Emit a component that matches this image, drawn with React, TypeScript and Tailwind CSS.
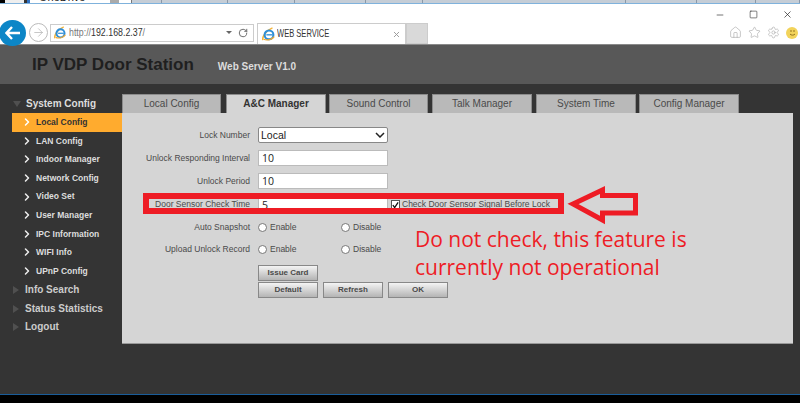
import React from 'react';
import { ChevronRight, Home, Star, Settings, RotateCw, ArrowRight, X, Minus, Square } from 'lucide-react';

const sideItems = ['Local Config', 'LAN Config', 'Indoor Manager', 'Network Config', 'Video Set', 'User Manager', 'IPC Information', 'WIFI Info', 'UPnP Config'];
const tabs = [
  { label: 'Local Config', w: 'w-[99px] mr-[5px]' },
  { label: 'A&C Manager', w: 'w-[100px] mr-[3px]' },
  { label: 'Sound Control', w: 'w-[99px] mr-[4px]' },
  { label: 'Talk Manager', w: 'w-[100px] mr-[4px]' },
  { label: 'System Time', w: 'w-[100px] mr-[3px]' },
  { label: 'Config Manager', w: 'w-[100px]' },
];
const stripCells = ['w-[30px]', 'w-[66px]', 'w-[67px]', 'w-[71px]', 'w-[57px]', 'w-[203px]', 'w-[71px]', 'w-[59px]', 'w-[44px]'];

const IeLogo = ({ size = 13 }: { size?: number }) => (
  <svg width={size} height={size} viewBox="0 0 16 16" className="shrink-0">
    <path d="M1 15C0 12 4 4 12 1" fill="none" stroke="#f5b53a" strokeWidth="1.8" />
    <circle cx="8" cy="9" r="5" fill="none" stroke="#2f8fd8" strokeWidth="2.4" />
    <rect x="5" y="8.2" width="7" height="1.5" fill="#2f8fd8" />
    <path d="M2 14C6 16 12 14 14 11" fill="none" stroke="#f0a830" strokeWidth="1.4" />
  </svg>
);

const Label = ({ children }: { children: React.ReactNode }) => (
  <div className="w-[128px] whitespace-nowrap text-right text-[#4a4a4a] text-[8.5px] font-medium leading-none shrink-0">{children}</div>
);

const TextBox = ({ value }: { value: string }) => (
  <div className="w-[130px] h-full bg-white border border-[#bbb] pl-[3px] text-[10.5px] leading-[14px] text-[#222] font-['Open_Sans',sans-serif]">{value}</div>
);

const Radio = ({ label }: { label: string }) => (
  <div className="flex items-center gap-[3px] w-[75px]">
    <div className="w-[9px] h-[9px] rounded-full bg-white border border-[#777]" />
    <span className="text-[8.5px] leading-none text-[#4a4a4a]">{label}</span>
  </div>
);

const Btn = ({ label, w }: { label: string; w: string }) => (
  <div className={`${w} h-[16px] flex items-center justify-center text-[8px] font-bold text-[#4a4a4a] border border-[#888] bg-gradient-to-b from-[#f4f4f4] to-[#b4b4b4]`}>{label}</div>
);

const Triangle = ({ down }: { down?: boolean }) => (
  <div className={down
    ? 'w-0 h-0 border-x-[4px] border-x-transparent border-t-[6px] border-t-[#505050] shrink-0'
    : 'w-0 h-0 border-y-[4px] border-y-transparent border-l-[6px] border-l-[#505050] shrink-0'} />
);

export default function App() {
  return (
    <div className="relative w-[800px] h-[403px] overflow-hidden bg-black font-['Liberation_Sans',Arial,sans-serif]">
      {/* strip of the window behind */}
      <div className="h-[3px] flex bg-[#c5cdd6] overflow-hidden">
        <div className="w-[5px] bg-black" />
        <div className="w-[19px] bg-[#eee]" />
        <div className="w-[3px] bg-[#333]" />
        <div className="w-[83px] bg-white relative">
          <div className="w-[3px] h-full bg-[#2f6fc0]" />
          <span className="absolute left-[12px] top-[-8px] text-[11px] leading-none text-[#222]">OneDrive</span>
        </div>
        <div className="w-[9px] bg-[#aaa]" />
        <div className="w-[13px] border-r border-[#777] bg-white" />
        {stripCells.map((w, i) => (
          <div key={i} className={`${w} border-r border-[#8a98a8]`} />
        ))}
      </div>
      <div className="h-[1px] bg-[#7fb2dc]" />

      {/* browser chrome */}
      <div className="h-[40px] bg-white flex flex-col">
        <div className="h-[17px] pt-[4px] flex items-center justify-end pr-[7px] text-[#222]">
          <Minus size={10} strokeWidth={1.5} />
          <Square size={9} strokeWidth={1.5} className="ml-[24px]" />
          <X size={11} strokeWidth={1.5} className="ml-[24px]" />
        </div>
        <div className="h-[23px] flex items-center overflow-visible">
          <div className="w-[27px] h-[26px] ml-[-1px] rounded-full bg-[#0c86c7] flex items-center justify-center shrink-0">
            <svg width="16" height="14" viewBox="0 0 16 14"><path d="M7 1 1.500 7 7 13M2 7h13" fill="none" stroke="#fff" strokeWidth="2.400" /></svg>
          </div>
          <div className="w-[19px] h-[19px] ml-[3px] rounded-full border border-[#bbb] flex items-center justify-center shrink-0 text-[#aaa]">
            <ArrowRight size={13} strokeWidth={1.2} />
          </div>
          <div className="ml-[2px] w-[204px] h-[18px] border border-[#ccc] flex items-center pl-[3px] pr-[5px] shrink-0">
            <IeLogo />
            <span className="ml-[2px] w-[78px] text-[10.5px] text-[#777] whitespace-nowrap origin-left scale-x-[0.84]">http://<span className="text-[#333]">192.168.2.37</span>/</span>
            <div className="ml-auto w-0 h-0 border-x-[3px] border-x-transparent border-t-[3px] border-t-[#666]" />
            <RotateCw size={10} className="ml-[6px] text-[#555]" />
          </div>
          <div className="ml-[3px] w-[149px] h-[21px] mt-[2px] border-x border-t border-[#ccc] flex items-center pl-[4px] pr-[4px] shrink-0">
            <IeLogo size={14} />
            <span className="ml-[1px] w-[52px] text-[10.5px] text-[#333] whitespace-nowrap origin-left scale-x-[0.72]">WEB SERVICE</span>
            <X size={9} strokeWidth={2.500} className="ml-auto text-[#999]" />
          </div>
          <div className="w-[22px] h-[21px] mt-[2px] bg-[#d9d9d9] border border-[#ccc] shrink-0" />
          <div className="ml-auto flex items-center gap-[6px] pr-[2px] text-[#aaa]">
            <Home size={13} strokeWidth={1.2} />
            <Star size={13} strokeWidth={1.2} />
            <Settings size={13} strokeWidth={1.2} />
            <div className="w-[12px] h-[12px] rounded-full bg-[#f2d35a] flex items-center justify-center">
              <svg width="9" height="9" viewBox="0 0 9 9"><path d="M3 2v2M6 2v2M2 6c1 1.500 4 1.500 5 0" fill="none" stroke="#8a6a1a" strokeWidth="0.900" /></svg>
            </div>
          </div>
        </div>
      </div>

      {/* page header */}
      <div className="h-[40px] bg-[#585858] border-t border-[#8a8a8a] flex items-center pl-[32px]">
        <div className="text-[17px] font-bold text-[#1f1f1f] leading-none">IP VDP Door Station</div>
        <div className="ml-[24px] mt-[5px] text-[10px] font-bold text-[#ddd] leading-none">Web Server V1.0</div>
      </div>

      {/* page body */}
      <div className="h-[310px] bg-[#343434] flex">
        <div className="w-[122px] shrink-0 pt-[11px]">
          <div className="h-[18px] flex items-center pl-[13px] gap-[5px]">
            <Triangle down />
            <span className="text-[10px] font-bold text-[#ddd] leading-none">System Config</span>
          </div>
          {sideItems.map((item, i) => (
            <div key={item} className={`h-[18.600px] ml-[12px] pl-[9px] flex items-center gap-[3px] text-[8.5px] font-bold leading-none ${i === 0 ? 'bg-[#ffab2e] text-[#333]' : 'text-[#ddd]'}`}>
              <ChevronRight size={12} strokeWidth={3} className={i === 0 ? 'text-white' : 'text-[#eee]'} />
              {item}
            </div>
          ))}
          {['Info Search', 'Status Statistics', 'Logout'].map((item) => (
            <div key={item} className="h-[18.800px] flex items-center pl-[13px] gap-[6px]">
              <Triangle />
              <span className="text-[10px] font-bold text-[#ccc] leading-none">{item}</span>
            </div>
          ))}
        </div>

        <div className="w-[671px] pt-[10px]">
          <div className="flex h-[19px]">
            {tabs.map((t) => (
              <div key={t.label} className={`${t.w} h-full flex items-center justify-center text-[10px] leading-none border-t border-x border-[#8c8c8c] ${t.label === 'A&C Manager' ? 'bg-[#d5d5d5] font-bold text-[#333]' : 'bg-[#b9b9b9] text-[#4a4a4a]'}`}>
                {t.label}
              </div>
            ))}
          </div>
          <div className="h-[231px] bg-[#d5d5d5] border-b border-[#999] pt-[14px] flex flex-col">
            <div className="h-[16px] flex items-center gap-[8px]">
              <Label>Lock Number</Label>
              <div className="w-[130px] h-[16px] bg-white border border-[#888] rounded-[2px] flex items-center justify-between px-[2px] text-[10.5px] text-[#222]">
                <span className="leading-none">Local</span>
                <svg width="10" height="6" viewBox="0 0 10 6"><path d="M1 1l4 4 4-4" fill="none" stroke="#222" strokeWidth="1.500" /></svg>
              </div>
            </div>
            <div className="h-[16px] mt-[7px] flex items-center gap-[8px]">
              <Label>Unlock Responding Interval</Label>
              <TextBox value="10" />
            </div>
            <div className="h-[16px] mt-[7px] flex items-center gap-[8px]">
              <Label>Unlock Period</Label>
              <TextBox value="10" />
            </div>
            <div className="h-[15px] mt-[8px] flex items-center gap-[8px]">
              <Label>Door Sensor Check Time</Label>
              <div className="flex items-center h-full">
                <TextBox value="5" />
                <div className="ml-[3px] w-[9px] h-[9px] bg-white border border-[#555] flex items-center justify-center shrink-0">
                  <svg width="8" height="8" viewBox="0 0 8 8"><path d="M1 4l2 3 4-6" fill="none" stroke="#111" strokeWidth="1.500" /></svg>
                </div>
                <span className="ml-[2px] whitespace-nowrap text-[8.5px] leading-none text-[#4a4a4a]">Check Door Sensor Signal Before Lock</span>
              </div>
            </div>
            <div className="h-[16px] mt-[7px] flex items-center gap-[8px]">
              <Label>Auto Snapshot</Label>
              <Radio label="Enable" />
              <Radio label="Disable" />
            </div>
            <div className="h-[16px] mt-[6px] flex items-center gap-[8px]">
              <Label>Upload Unlock Record</Label>
              <Radio label="Enable" />
              <Radio label="Disable" />
            </div>
            <div className="ml-[136px] mt-[8px] flex flex-col gap-[1px]">
              <Btn label="Issue Card" w="w-[60px]" />
              <div className="flex gap-[5px]">
                <Btn label="Default" w="w-[60px]" />
                <Btn label="Refresh" w="w-[60px]" />
                <Btn label="OK" w="w-[60px]" />
              </div>
            </div>
          </div>
        </div>
      </div>
      <div className="h-[1px] bg-[#1a5d9a]" />

      {/* red annotation over the page */}
      <div className="absolute left-[143px] top-[193px] w-[421px] h-[21px] border-[6px] border-[#ee1c25]" />
      <svg className="absolute left-[560px] top-[180px]" width="85" height="48" viewBox="0 0 85 48">
        <path d="M13 24 42.500 10V15.500H75.500V33H42.500V40Z" fill="none" stroke="#ee1c25" strokeWidth="5" />
      </svg>
      <div className="absolute left-[415px] top-[225px] w-[300px] whitespace-nowrap text-[#ee1c25] text-[21px] leading-[28px] font-['Open_Sans',sans-serif]">
        Do not check, this feature is<br />currently not operational
      </div>
    </div>
  );
}
